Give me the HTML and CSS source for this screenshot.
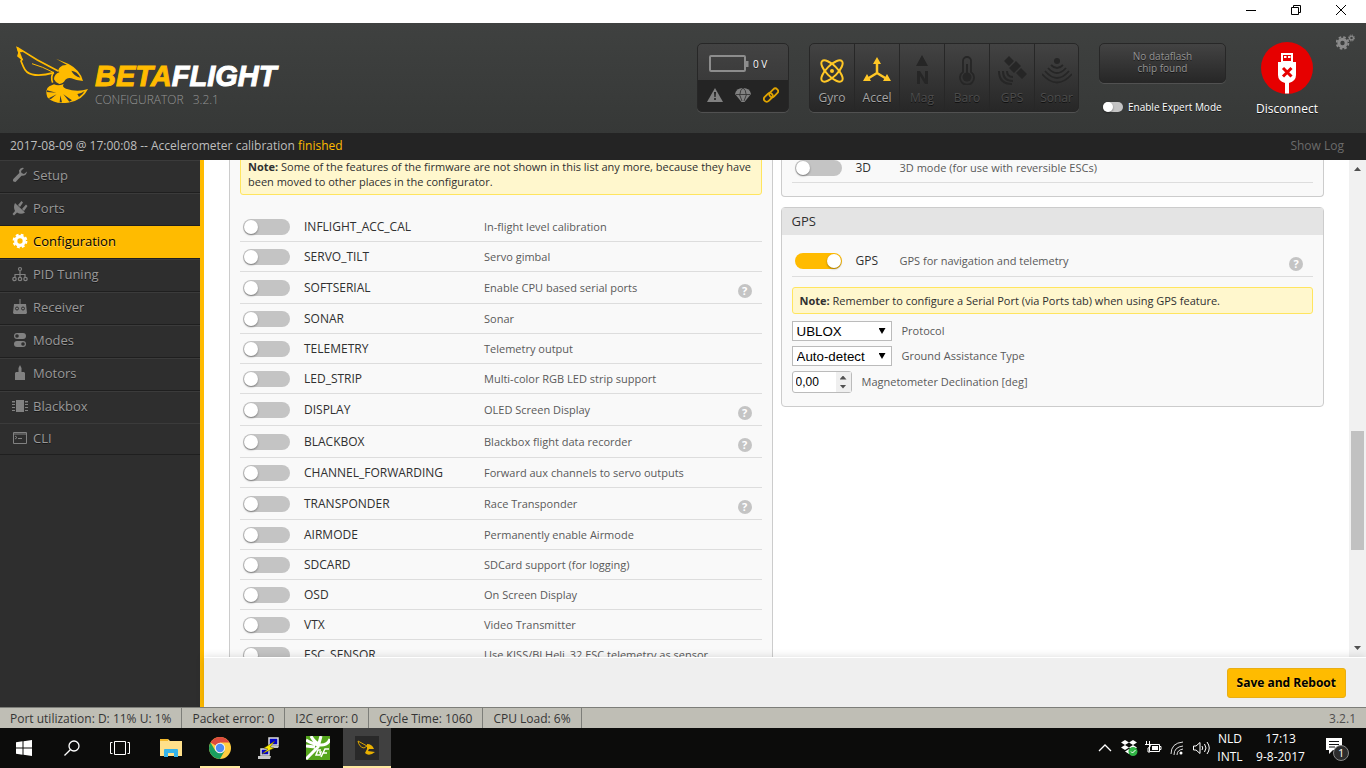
FILE: index.html
```html
<!DOCTYPE html>
<html lang="en">
<head>
    <meta charset="UTF-8">
    <meta name="viewport" content="width=device-width, initial-scale=1.0">
    <title>Betaflight Configurator</title>
    <link rel="stylesheet" href="styles.css">
</head>
<body>
    <!-- Window buttons -->
    <div class="titlebar">
        <button aria-label="Minimize"><svg width="10" height="10"><path d="M0 5.500h10"/></svg></button>
        <button aria-label="Restore"><svg width="10" height="10"><path d="M.5 2.500h7v7h-7zM2.500 2.500v-2h7v7h-2"/></svg></button>
        <button aria-label="Close"><svg width="10" height="10"><path d="M0 0l10 10M10 0L0 10"/></svg></button>
    </div>

    <header class="header">
        <div class="logo">
            <svg class="wasp" width="75" height="60" viewBox="15 15 225 180">
                <g fill="none" stroke="#ffbb00" stroke-width="5">
                    <path d="M21 22L82 60L146 94M22 22L27 38L24 48L36 58L33 63L40 80Q48 100 66 103Q90 110 132 98"/>
                    <path d="M66 71L98 82L132 98" stroke-width="3"/>
                    <path d="M130 98Q121 112 128 128"/>
                </g>
                <g fill="#ffbb00">
                    <path d="M18 18L40 36L30 37L40 62L28 52L25 38Z"/>
                    <path d="M138 56L176 72Q211 90 219 123Q198 121 184 115Q173 112 166 119Q160 130 148 132Q136 128 132 118Q133 101 148 97Q142 89 150 82Q157 74 171 75Z"/>
                    <path d="M132 133Q145 139 161 132Q155 141 168 146Q202 158 234 147Q218 182 174 188Q132 194 112 172Q104 148 118 139Z"/>
                </g>
                <g fill="#3a3c3b">
                    <path d="M184 92Q202 94 211 113Q192 109 184 92Z"/>
                    <path d="M111 151L139 158L110 156ZM116 175L140 163L122 178ZM149 187L151 166L156 187ZM178 185L160 163L186 181ZM202 162Q214 160 224 153Q218 164 207 171Z"/>
                </g>
            </svg>
            <div class="brand">
                <div class="wordmark">BETA<span>FLIGHT</span></div>
                <div class="product">CONFIGURATOR <span>3.2.1</span></div>
            </div>
        </div>

        <div class="battery">
            <div class="battery-top">
                <svg width="40" height="18"><rect x="1" y="1" width="35" height="15" rx="1" fill="none" stroke="#8d8d8d" stroke-width="2"/><path d="M37 6h2.500v6H37z" fill="#8d8d8d"/></svg>
                <span>0 V</span>
            </div>
            <div class="battery-bottom">
                <svg width="16" height="16" viewBox="0 0 16 16"><path d="M8 1L16 15H0Z" fill="#818181"/><path d="M7 5h2l-.4 5H7.400zM7.200 11h1.600v2H7.200z" fill="#222"/></svg>
                <svg width="16" height="16" viewBox="0 0 16 16"><path d="M0 7Q1 1 8 1T16 7L9.500 15H6.500Z" fill="#818181"/><path d="M1 7.500H15M4.500 7.500L7 14M11.500 7.500L9 14M5 7Q5 3 8 1Q11 3 11 7" fill="none" stroke="#2c2c2c" stroke-width=".8"/></svg>
                <svg width="16" height="16" viewBox="0 0 16 16"><g fill="none" stroke="#e0a400" stroke-width="1.800"><rect x="5.700" y="3" width="10" height="5.600" rx="2.800" transform="rotate(-45 10.700 5.800)"/><rect x=".3" y="7.600" width="10" height="5.600" rx="2.800" transform="rotate(-45 5.300 10.400)"/></g></svg>
            </div>
        </div>

        <div class="sensors">
            <div class="sensor on">
                <svg width="30" height="30" viewBox="0 0 30 30"><g fill="none" stroke="currentColor" stroke-width="2"><ellipse cx="15" cy="16" rx="14" ry="5.500" transform="rotate(45 15 16)"/><ellipse cx="15" cy="16" rx="14" ry="5.500" transform="rotate(-45 15 16)"/></g><circle cx="15" cy="16" r="2"/></svg>
                <span>Gyro</span>
            </div>
            <div class="sensor on">
                <svg width="30" height="30" viewBox="0 0 30 30"><path d="M15 7V18M15 18L6 23.500M15 18L24 23.500" stroke="currentColor" stroke-width="2.500"/><path d="M15 2L19 9H11ZM1 26L5 19L9 26ZM29 26L25 19L21 26Z"/></svg>
                <span>Accel</span>
            </div>
            <div class="sensor">
                <svg width="30" height="30" viewBox="0 0 30 30"><path d="M15 0L21 11H9ZM10 29V16h3l5 8v-8h3v13h-3l-5-8v8Z"/></svg>
                <span>Mag</span>
            </div>
            <div class="sensor">
                <svg width="30" height="30" viewBox="0 0 30 30"><path d="M11 17V6a4 4 0 0 1 8 0v11a7 7 0 1 1-8 0Z" fill="none" stroke="currentColor" stroke-width="1.800"/><circle cx="15" cy="22" r="4.500"/><path d="M14 9h2v11h-2z"/></svg>
                <span>Baro</span>
            </div>
            <div class="sensor">
                <svg width="30" height="30" viewBox="0 0 30 30"><path d="M7 6L12 1L17 6L12 11ZM19 18L24 13L30 19L25 24ZM12 13L19 6L24 11L17 18Z"/><path d="M10 16q0 6 6 6M6 16q0 10 10 10M2 16q0 13 13 13" fill="none" stroke="currentColor" stroke-width="2"/></svg>
                <span>GPS</span>
            </div>
            <div class="sensor">
                <svg width="30" height="30" viewBox="0 0 30 30"><circle cx="15" cy="6" r="3"/><path d="M9 10q6 6 12 0M6 13q9 10 18 0M3 16q12 14 24 0M0 19q15 17 30 0" fill="none" stroke="currentColor" stroke-width="1.800"/></svg>
                <span>Sonar</span>
            </div>
        </div>

        <div class="flash">
            <div class="dataflash">No dataflash<br>chip found</div>
            <div class="expert">
                <input type="checkbox" class="toggle small" id="expertMode">
                <label for="expertMode">Enable Expert Mode</label>
            </div>
        </div>

        <button class="connect">
            <svg width="52" height="52" viewBox="0 0 52 52"><circle cx="26" cy="26" r="26" fill="#e60000"/><path d="M20 11h12v9h3v13q0 6-7 8v10.500h-4V41q-7-2-7-8V20h3Z" fill="#fff"/><path d="M22 13h8v6h-8z" fill="#e60000"/><path d="M23 14h2.500v2H23zM27 14h2.500v2H27z" fill="#fff"/><path d="M22 26l8.500 8.500M30.500 26L22 34.500" stroke="#e60000" stroke-width="3"/></svg>
            <span>Disconnect</span>
        </button>

        <button class="options" aria-label="Options">
            <svg width="19" height="17" viewBox="0 0 19 17"><g fill="none" stroke="#8b8b8b"><circle cx="6.500" cy="9" r="3.700" stroke-width="3"/><circle cx="6.500" cy="9" r="5.900" stroke-width="1.800" stroke-dasharray="2.600 2.034"/><circle cx="15.500" cy="4" r="1.900" stroke-width="1.300"/><circle cx="15.500" cy="4" r="3" stroke-width="1" stroke-dasharray="1.300 1.056"/></g></svg>
        </button>
    </header>

    <div class="log">
        <p>2017-08-09 @ 17:00:08 -- Accelerometer calibration <span>finished</span></p>
        <a href="#">Show Log</a>
    </div>

    <div class="main">
        <nav class="tabs">
            <a href="#"><svg width="16" height="16" viewBox="0 0 16 16"><path d="M15 4.500L12 7L9.500 6L9 4L12 1Q8.500 0 7 3.500L7.300 6L1.300 12Q0 15 3.500 15L9.500 8.700Q14.500 9 15 4.500Z"/></svg>Setup</a>
            <a href="#"><svg width="16" height="16" viewBox="0 0 16 16"><path d="M3 3L13 12.500Q9 15 5 12.500L2 15.500L.5 14L3 11Q1 7 3 3ZM6 5L9.500 1L11 2.500L8 7ZM10 9L14 4.500L15.500 6L12 11Z"/></svg>Ports</a>
            <a href="#" class="active"><svg width="16" height="16" viewBox="0 0 16 16"><g fill="none" stroke="currentColor"><circle cx="8" cy="8" r="4.300" stroke-width="3.300"/><circle cx="8" cy="8" r="6.400" stroke-width="2" stroke-dasharray="2.800 2.226"/></g></svg>Configuration</a>
            <a href="#"><svg width="16" height="16" viewBox="0 0 16 16"><g fill="none" stroke="currentColor" stroke-width="1.200"><circle cx="8" cy="3" r="1.500"/><path d="M8 4.500V11M3 11V8.500H13V11"/><circle cx="2.500" cy="13" r="1.700"/><circle cx="8" cy="13" r="1.700"/><circle cx="13.500" cy="13" r="1.700"/></g></svg>PID Tuning</a>
            <a href="#"><svg width="16" height="16" viewBox="0 0 16 16"><path d="M7.500 0h1v5H14l1 9-1 1H2l-1-1 1-9h5.500z"/><g fill="none" stroke="#2e2e2e"><circle cx="5" cy="9.500" r="1.500"/><circle cx="11" cy="9.500" r="1.500"/></g></svg>Receiver</a>
            <a href="#"><svg width="16" height="16" viewBox="0 0 16 16"><rect x="2" y="1" width="12" height="6" rx="3"/><rect x="2" y="9" width="12" height="6" rx="3"/><circle cx="5" cy="4" r="1.800" fill="#2e2e2e"/><circle cx="11" cy="12" r="1.800" fill="#2e2e2e"/></svg>Modes</a>
            <a href="#"><svg width="16" height="16" viewBox="0 0 16 16"><path d="M8 0L9.500 3V7H12L13 8V15H3V8L4 7H6.500V3Z"/></svg>Motors</a>
            <a href="#"><svg width="16" height="16" viewBox="0 0 16 16"><path d="M4 2h8v12H4zM0 3h3v1.500H0zM0 6h3v1H0zM0 9h3v1H0zM0 12h3v1H0zM13 3h3v1.500h-3zM13 6h3v1h-3zM13 9h3v1h-3zM13 12h3v1h-3z"/></svg>Blackbox</a>
            <a href="#"><svg width="16" height="16" viewBox="0 0 16 16"><path d="M1.500 2.500h13v11h-13zM1 4h14M3 6l2 1.500L3 9M6 8.500h4" fill="none" stroke="currentColor"/></svg>CLI</a>
        </nav>

        <div class="content">
            <div class="scroll-area">
                <div class="viewport">
                    <div class="columns">
                        <section class="column">
                            <div class="box features">
                                <p class="note"><b>Note:</b> Some of the features of the firmware are not shown in this list any more, because they have been moved to other places in the configurator.</p>
                                <div class="feature"><input type="checkbox" class="toggle" id="f1"><label for="f1">INFLIGHT_ACC_CAL</label><span>In-flight level calibration</span></div>
                                <div class="feature"><input type="checkbox" class="toggle" id="f2"><label for="f2">SERVO_TILT</label><span>Servo gimbal</span></div>
                                <div class="feature helped"><input type="checkbox" class="toggle" id="f3"><label for="f3">SOFTSERIAL</label><span>Enable CPU based serial ports</span><i class="help">?</i></div>
                                <div class="feature"><input type="checkbox" class="toggle" id="f4"><label for="f4">SONAR</label><span>Sonar</span></div>
                                <div class="feature"><input type="checkbox" class="toggle" id="f5"><label for="f5">TELEMETRY</label><span>Telemetry output</span></div>
                                <div class="feature"><input type="checkbox" class="toggle" id="f6"><label for="f6">LED_STRIP</label><span>Multi-color RGB LED strip support</span></div>
                                <div class="feature helped"><input type="checkbox" class="toggle" id="f7"><label for="f7">DISPLAY</label><span>OLED Screen Display</span><i class="help">?</i></div>
                                <div class="feature helped"><input type="checkbox" class="toggle" id="f8"><label for="f8">BLACKBOX</label><span>Blackbox flight data recorder</span><i class="help">?</i></div>
                                <div class="feature"><input type="checkbox" class="toggle" id="f9"><label for="f9">CHANNEL_FORWARDING</label><span>Forward aux channels to servo outputs</span></div>
                                <div class="feature helped"><input type="checkbox" class="toggle" id="f10"><label for="f10">TRANSPONDER</label><span>Race Transponder</span><i class="help">?</i></div>
                                <div class="feature"><input type="checkbox" class="toggle" id="f11"><label for="f11">AIRMODE</label><span>Permanently enable Airmode</span></div>
                                <div class="feature"><input type="checkbox" class="toggle" id="f12"><label for="f12">SDCARD</label><span>SDCard support (for logging)</span></div>
                                <div class="feature"><input type="checkbox" class="toggle" id="f13"><label for="f13">OSD</label><span>On Screen Display</span></div>
                                <div class="feature"><input type="checkbox" class="toggle" id="f14"><label for="f14">VTX</label><span>Video Transmitter</span></div>
                                <div class="feature"><input type="checkbox" class="toggle" id="f15"><label for="f15">ESC_SENSOR</label><span>Use KISS/BLHeli_32 ESC telemetry as sensor</span></div>
                            </div>
                        </section>

                        <section class="column narrow-labels">
                            <div class="box">
                                <div class="feature"><input type="checkbox" class="toggle" id="f16"><label for="f16">3D</label><span>3D mode (for use with reversible ESCs)</span></div>
                            </div>

                            <!-- GPS -->
                            <div class="box gps">
                                <h2>GPS</h2>
                                <div class="feature helped"><input type="checkbox" class="toggle" id="f17" checked><label for="f17">GPS</label><span>GPS for navigation and telemetry</span><i class="help">?</i></div>
                                <p class="note"><b>Note:</b> Remember to configure a Serial Port (via Ports tab) when using GPS feature.</p>
                                <div class="field">
                                    <div class="select"><select id="gpsProtocol"><option>UBLOX</option><option>NMEA</option></select></div>
                                    <label for="gpsProtocol">Protocol</label>
                                </div>
                                <div class="field">
                                    <div class="select"><select id="gpsAssist"><option>Auto-detect</option></select></div>
                                    <label for="gpsAssist">Ground Assistance Type</label>
                                </div>
                                <div class="field">
                                    <div class="number"><input type="text" inputmode="decimal" id="magDeclination" value="0,00"><div class="spin"></div></div>
                                    <label for="magDeclination">Magnetometer Declination [deg]</label>
                                </div>
                            </div>
                        </section>
                    </div>
                </div>
                <div class="scrollbar">
                    <div class="arrow up"></div>
                    <div class="before"></div>
                    <div class="thumb"></div>
                    <div class="after"></div>
                    <div class="arrow down"></div>
                </div>
            </div>
            <div class="toolbar">
                <button class="save">Save and Reboot</button>
            </div>
        </div>
    </div>

    <div class="statusbar">
        <span>Port utilization: D: 11% U: 1%</span>
        <span>Packet error: 0</span>
        <span>I2C error: 0</span>
        <span>Cycle Time: 1060</span>
        <span>CPU Load: 6%</span>
        <div class="version">3.2.1</div>
    </div>

    <!-- Windows taskbar -->
    <div class="taskbar">
        <button aria-label="Start"><svg width="16" height="16" viewBox="0 0 16 16"><path d="M0 2.200L6.500 1.300V7.500H0ZM7.500 1.200L16 0V7.500H7.500ZM0 8.500H6.500V14.700L0 13.800ZM7.500 8.500H16V16L7.500 14.800Z" fill="#fff"/></svg></button>
        <button aria-label="Search"><svg width="16" height="16" viewBox="0 0 16 16"><g fill="none" stroke="#fff" stroke-width="1.300"><circle cx="10" cy="6" r="5"/><path d="M6.300 9.700L.5 15.500"/></g></svg></button>
        <button aria-label="Task view"><svg width="20" height="16" viewBox="0 0 20 16"><path d="M4.500 1.500h11v13h-11zM2.500 2.500h-2v11h2M17.500 2.500h2v11h-2" fill="none" stroke="#fff"/></svg></button>
        <div class="apps">
            <button aria-label="File Explorer"><svg width="22" height="20" viewBox="0 0 22 20"><path d="M0 1h8l2 2h12v15H0z" fill="#ffe08a"/><path d="M0 1h8v2H0z" fill="#f3b92c"/><path d="M4 19v-7q0-1 1-1h12q1 0 1 1v7h-4v-4H8v4z" fill="#35b3ea"/></svg></button>
            <button class="running" aria-label="Chrome"><svg width="22" height="22" viewBox="0 0 22 22"><circle cx="11" cy="11" r="11" fill="#ffcd40"/><path d="M11 11L1.500 5.500A11 11 0 0 1 20.500 5.500H11Z" fill="#dd4b3e"/><path d="M1.500 5.500A11 11 0 0 0 11 22L15.500 14L11 11L6.500 14Z" fill="#1a9f5f"/><circle cx="11" cy="11" r="5.200" fill="#f1f1f1"/><circle cx="11" cy="11" r="4.200" fill="#4c8bf5"/></svg></button>
            <button aria-label="PuTTY"><svg width="22" height="22" viewBox="0 0 22 22"><g stroke="#ddd" fill="#0000c8" stroke-width="1.500"><path d="M11 1h9v7h-9zM3 12h8v6H3z"/></g><path d="M9 9h12l-1 2H9zM0 19h13l-1 3H0z" fill="#c8c8c8"/><path d="M17 4L6 11L10 12L4 17L16 11L12 10Z" fill="#ffee00" stroke="#554c00" stroke-width=".5"/></svg></button>
            <button aria-label="Cleanflight"><svg width="24" height="24" viewBox="0 0 24 24"><path d="M0 0h24v24H0z" fill="#55a51c"/><path d="M0 4Q8 9 15 9T24 3M5 0Q8 6 13 8M15 0L12 11L0 23M0 10L9 11" fill="none" stroke="#fff" stroke-width="3"/><path d="M15 14h-3l-2 5h4l1-3h-2M23 13h-4l-4 8M17 17h4" fill="none" stroke="#fff" stroke-width="1.500"/></svg></button>
            <button class="running current" aria-label="Betaflight"><svg width="24" height="24" viewBox="0 0 24 24"><path d="M0 0h24v24H0z" fill="#292929"/><path d="M3 5L12 10L9 12Q4 11 3 5Z" fill="none" stroke="#d9a400"/><path d="M12 8Q17 8 19 13L14 13L13 15L20 16Q14 21 10 17L12 13Z" fill="#e9b000"/></svg></button>
        </div>
        <div class="tray">
            <svg width="24" height="16" viewBox="0 0 24 16"><path d="M6 11L12 5L18 11" fill="none" stroke="#fff" stroke-width="1.300"/></svg>
            <svg width="24" height="16" viewBox="0 0 24 16"><path d="M8 0l4 2.500L8 5 4 2.500zM16 0l4 2.500L16 5l-4-2.500zM8 5l4 2.500L8 10 4 7.500zM16 5l4 2.500-4 2.500-4-2.500zM12 9l4 2.500-4 2.500-4-2.500z" fill="#fff"/><circle cx="16" cy="11.500" r="4.500" fill="#2fb344"/><path d="M14 11.500l1.500 1.500 3-3" fill="none" stroke="#fff"/></svg>
            <svg width="24" height="16" viewBox="0 0 24 16"><path d="M8.500 4.500h10v7h-10zM18.500 6.500h1.500v3h-1.500M5.500 1v3M8.500 1v3M4 4.500h5.500q0 3.500-2.500 3.500V12h2" fill="none" stroke="#fff"/><path d="M11 6h6v4h-6z" fill="#fff"/></svg>
            <svg width="24" height="16" viewBox="0 0 24 16"><g fill="none" stroke="#ddd"><path d="M6 14Q6 3 18 2M9 15Q9 7 18 6M12 15Q12 10 18 9"/></g><circle cx="16" cy="13" r="1.500" fill="#fff"/></svg>
            <svg width="24" height="16" viewBox="0 0 24 16"><path d="M4.500 6v4h2.500l4 3.500v-11L7 6zM13 6q1.500 2 0 4M15.500 4q3 4 0 8M18 2q4.500 6 0 12" fill="none" stroke="#fff"/></svg>
            <div class="lang">NLD<br>INTL</div>
            <div class="clock">17:13<br>9-8-2017</div>
            <button aria-label="Notifications"><svg width="26" height="26" viewBox="0 0 26 26"><path d="M1 3h16v12H8l-4 4v-4H1z" fill="#fff"/><path d="M4 6.500h10M4 9.500h10M4 12h6" stroke="#111"/><circle cx="16" cy="18" r="7.500" fill="#2c2c2c" stroke="#888"/><text x="13" y="22" font-size="11" fill="#fff">1</text></svg></button>
        </div>
    </div>
</body>
</html>
```
FILE: styles.css
```css
* {
    box-sizing: border-box;
}

body {
    font-family: 'Open Sans', 'Noto Sans', sans-serif;
    font-size: 12px;
    margin: 0;
    height: 100vh;
    display: flex;
    flex-direction: column;
    overflow: hidden;
    background-color: #fff;
    color: #303030;
}

p, h2 {
    margin: 0;
    font-weight: normal;
}

a {
    text-decoration: none;
    color: inherit;
}

button {
    font-family: inherit;
    background: none;
    border: none;
    padding: 0;
    display: flex;
    align-items: center;
    justify-content: center;
}

svg {
    flex: none;
    display: block;
}

.titlebar {
    height: 23px;
    flex: none;
    display: flex;
    justify-content: flex-end;
    padding: 0 3px 3px 0;
}

.titlebar button {
    width: 45px;
}

.titlebar path {
    fill: none;
    stroke: #000;
}

/* Header */
.header {
    height: 110px;
    flex: none;
    display: flex;
    padding: 20px 11px 0 15px;
    background: linear-gradient(#3f4140, #363837);
    color: #fff;
    text-shadow: 0 1px rgba(0, 0, 0, 0.6);
}

.logo {
    display: flex;
    margin-right: auto;
}

.wasp {
    margin-top: 2px;
}

.brand {
    margin: 16px 0 0 5px;
    text-shadow: none;
}

.wordmark {
    font-family: 'Liberation Sans', sans-serif;
    font-size: 29px;
    line-height: 34px;
    font-weight: bold;
    font-style: italic;
    color: #ffbb00;
    -webkit-text-stroke: 1px;
}

.wordmark span {
    color: #fff;
}

.product {
    font-weight: 300;
    line-height: 14px;
    color: #949494;
}

.product span {
    margin-left: 6px;
}

.battery, .sensors, .dataflash {
    border: 1px solid #272727;
    border-radius: 5px;
    box-shadow: 0 1px #515151;
    background: linear-gradient(#434343, #272727);
    overflow: hidden;
}

.battery {
    width: 92px;
    height: 69px;
    margin-right: 20px;
    background: linear-gradient(#434343, #333);
}

.battery-top {
    height: 36px;
    display: flex;
    align-items: center;
    gap: 4px;
    padding: 3px 0 0 11px;
    font-size: 10px;
}

.battery-bottom {
    height: 31px;
    display: flex;
    align-items: center;
    justify-content: space-between;
    padding: 0 9px 2px;
    background-color: #242424;
}

.sensors {
    display: flex;
    height: 69px;
    margin-right: 20px;
}

.sensor {
    width: 45px;
    padding-top: 11px;
    display: flex;
    flex-direction: column;
    align-items: center;
    gap: 5px;
    border-right: 1px solid #272727;
    color: #4c4c4c;
    line-height: 16px;
}

.sensor:last-child {
    width: 43px;
    border-right: none;
}

.sensor svg {
    color: #262626;
    fill: currentColor;
}

.sensor.on {
    color: #a5a5a5;
}

.sensor.on svg {
    color: #ffc726;
}

.flash {
    width: 127px;
    margin-right: 29px;
}

.dataflash {
    height: 40px;
    padding-top: 6px;
    font-size: 10px;
    line-height: 12px;
    text-align: center;
    color: #949494;
}

.expert {
    display: flex;
    align-items: center;
    gap: 5px;
    margin-top: 16px;
    padding-left: 4px;
    font-size: 10px;
    line-height: 16px;
    white-space: nowrap;
}

.connect {
    flex-direction: column;
    justify-content: flex-start;
    margin-top: -1px;
    width: 64px;
    font-size: 12px;
    line-height: 16px;
    gap: 7px;
    color: #fff;
    text-shadow: 0 1px rgba(0, 0, 0, 0.6);
}

.options {
    align-self: flex-start;
    margin: -9px 0 0 17px;
}

/* Switches */
.toggle {
    appearance: none;
    flex: none;
    width: 47px;
    height: 16px;
    margin: 0;
    border-radius: 8px;
    background-color: #c4c4c4;
    display: flex;
}

.toggle::before {
    content: "";
    width: 14px;
    height: 14px;
    margin: 1px;
    border-radius: 50%;
    background-color: #fff;
    box-shadow: 0 1px 2px rgba(0, 0, 0, 0.4);
}

.toggle:checked {
    background-color: #ffbb00;
    justify-content: flex-end;
}

.toggle.small {
    width: 20px;
    height: 10px;
}

.toggle.small::before {
    width: 10px;
    height: 10px;
    margin: 0;
}

/* Log line */
.log {
    height: 27px;
    flex: none;
    display: flex;
    justify-content: space-between;
    padding: 0 22px 0 10px;
    line-height: 25px;
    background-color: #242424;
    color: #bebebe;
}

.log span {
    color: #ffbb00;
}

.log a {
    color: #6b6b6b;
}

.main {
    flex: 1;
    min-height: 0;
    display: flex;
}

/* Tabs */
.tabs {
    width: 204px;
    flex: none;
    border-right: 4px solid #ffbb00;
    background-color: #2e2e2e;
}

.tabs a {
    display: flex;
    align-items: center;
    gap: 5px;
    height: 33px;
    padding: 0 0 3px 12px;
    border-top: 1px solid #3b3b3b;
    border-bottom: 1px solid #1f1f1f;
    font-size: 13px;
    color: #999;
    text-shadow: 0 1px rgba(0, 0, 0, 0.5);
}

.tabs svg {
    color: #818181;
    fill: currentColor;
}

.tabs a.active {
    background-color: #ffbb00;
    border-top-color: #ffbb00;
    color: #000;
    text-shadow: 0 1px rgba(255, 255, 255, 0.4);
}

.tabs a.active svg {
    color: #fff;
}

.tabs a:nth-last-child(-n+2) {
    height: 32px;
}

.tabs a:nth-last-child(2) {
    border-bottom: none;
}

/* Content */
.content {
    flex: 1;
    min-width: 0;
    display: flex;
    flex-direction: column;
}

.scroll-area {
    flex: 1;
    min-height: 0;
    display: flex;
}

.viewport {
    flex: 1;
    overflow: hidden;
    padding: 0 25px;
}

.columns {
    display: flex;
    align-items: flex-start;
    gap: 8px;
    margin-top: -7px;
}

.column {
    flex: 1;
    min-width: 0;
    display: flex;
    flex-direction: column;
    gap: 10px;
}

.box {
    padding: 0 10px 13px;
    border: 1px solid #ccc;
    border-top: none;
    border-radius: 0 0 4px 4px;
    background-color: #f9f9f9;
}

.gps {
    border-top: 1px solid #ccc;
    border-radius: 4px;
}

.box h2 {
    margin: 0 -10px 10px;
    padding: 0 10px;
    font-size: 13px;
    line-height: 27px;
    background-color: #e4e4e4;
}

.note {
    padding: 5px 7px;
    border: 1px solid #ffe55f;
    border-radius: 3px;
    background-color: #fff7cd;
    font-size: 11px;
    line-height: 15px;
}

.features .note {
    margin-bottom: 17px;
}

.gps .note {
    margin: 10px 0 7px;
}

.feature {
    display: flex;
    align-items: center;
    height: 30px;
    padding: 1px 10px 0 3px;
    border-bottom: 1px solid #ddd;
}

.feature.helped {
    height: 32px;
}

.feature label {
    width: 180px;
    margin-left: 14px;
    padding-bottom: 2px;
}

.narrow-labels .feature label {
    width: 44px;
}

.feature span, .field label {
    padding-bottom: 2px;
    font-size: 11px;
    color: #5a5a5a;
}

.help {
    width: 14px;
    height: 14px;
    margin: 6px 0 0 auto;
    border-radius: 50%;
    background-color: #c4c4c4;
    color: #fff;
    font-size: 11px;
    font-style: normal;
    font-weight: bold;
    line-height: 14px;
    text-align: center;
}

.field {
    display: flex;
    align-items: center;
    gap: 10px;
    margin-top: 5px;
}

.select {
    display: flex;
    align-items: center;
}

.select select {
    appearance: none;
    width: 100px;
    height: 20px;
    padding: 0 4px;
    border: 1px solid #bbb;
    border-radius: 0;
    background-color: #fff;
    color: #000;
    font-family: 'Liberation Sans', sans-serif;
}

.select::after {
    content: "";
    width: 7px;
    height: 6px;
    margin: 0 6px 0 -13px;
    background-color: #000;
    clip-path: polygon(0 0, 100% 0, 50% 100%);
    pointer-events: none;
}

.number {
    display: flex;
    width: 60px;
    height: 22px;
    border: 1px solid #bbb;
    border-radius: 3px;
    background-color: #fff;
}

.number input {
    flex: 1;
    min-width: 0;
    padding: 0 3px;
    border: none;
    background: none;
    color: #000;
    font-family: 'Liberation Sans', sans-serif;
    font-size: 12px;
}

.spin {
    width: 15px;
    display: flex;
    flex-direction: column;
    align-items: center;
    justify-content: center;
    gap: 5px;
    background-color: #efefef;
}

.spin::before, .spin::after {
    content: "";
    width: 7px;
    height: 4px;
    background-color: #505050;
    clip-path: polygon(50% 0, 100% 100%, 0 100%);
}

.spin::after {
    clip-path: polygon(0 0, 100% 0, 50% 100%);
}

/* Scrollbar */
.scrollbar {
    width: 17px;
    flex: none;
    display: flex;
    flex-direction: column;
    align-items: center;
    background-color: #f1f1f1;
}

.arrow {
    width: 7px;
    height: 4px;
    margin: 7px 0 6px;
    background-color: #505050;
    clip-path: polygon(50% 0, 100% 100%, 0 100%);
}

.arrow.down {
    margin: 6px 0 7px;
    clip-path: polygon(0 0, 100% 0, 50% 100%);
}

.before {
    flex: 254;
}

.thumb {
    flex: 119;
    width: 13px;
    background-color: #c1c1c1;
}

.after {
    flex: 90;
}

.toolbar {
    height: 50px;
    flex: none;
    display: flex;
    align-items: center;
    justify-content: flex-end;
    padding: 1px 20px 0;
    background-color: #efefef;
    box-shadow: 0 0 8px rgba(0, 0, 0, 0.15);
    border-top: 1px solid #fff;
    position: relative;
}

.save {
    height: 30px;
    padding: 0 9px 2px;
    border: 1px solid #e8ae15;
    border-radius: 3px;
    background-color: #ffbb00;
    color: #000;
    font-size: 12px;
    font-weight: bold;
    text-shadow: 0 1px rgba(255, 255, 255, 0.3);
}

/* Status bar */
.statusbar {
    height: 21px;
    flex: none;
    display: flex;
    border-top: 1px solid #7d7e79;
    background-color: #bfbeb5;
    line-height: 21px;
    color: #353535;
    position: relative;
}

.statusbar span {
    padding: 0 10px;
    border-right: 1px solid #7d7e79;
}

.version {
    margin-left: auto;
    padding-right: 10px;
    color: #4f4f4f;
}

/* Taskbar */
.taskbar {
    height: 40px;
    flex: none;
    display: flex;
    background-color: #0c0c0b;
    color: #fff;
}

.taskbar button {
    width: 48px;
    height: 40px;
}

.apps {
    display: flex;
    gap: 1px;
    margin-left: 3px;
}

.running {
    background: linear-gradient(#ffe9a0, #ffe9a0) center bottom / 40px 2px no-repeat;
}

.running.current {
    background-size: 48px 2px;
    background-color: #404040;
}

.tray {
    display: flex;
    align-items: center;
    margin-left: auto;
    padding-right: 4px;
    line-height: 18px;
    text-align: center;
}

.lang {
    width: 34px;
}

.clock {
    width: 67px;
}
```
